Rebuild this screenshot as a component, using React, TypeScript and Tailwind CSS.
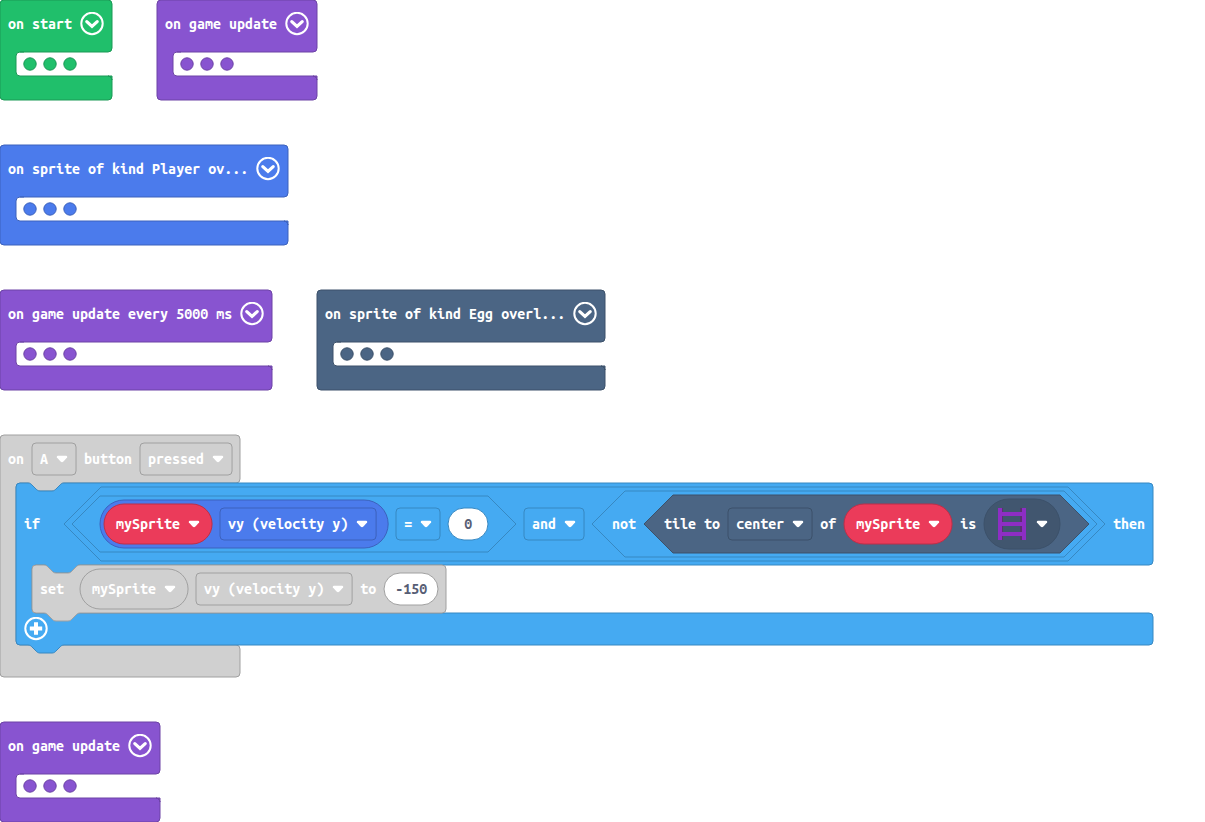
import React from "react";

type Tone = { fill: string; stroke: string };

const GREEN: Tone = { fill: "#20bf6b", stroke: "#1a9956" };
const PURPLE: Tone = { fill: "#8854d0", stroke: "#6d43a6" };
const BLUE: Tone = { fill: "#4b7bec", stroke: "#3c62bd" };
const SLATE: Tone = { fill: "#4b6584", stroke: "#3c516a" };
const SLATE_DARK: Tone = { fill: "#41566f", stroke: "#3c516a" };
const SKY: Tone = { fill: "#45aaf2", stroke: "#3788c2" };
const RED: Tone = { fill: "#eb3b5a", stroke: "#bc2f48" };
const GRAY: Tone = { fill: "#d0d0d0", stroke: "#a0a0a0" };
const WHITE_SKY: Tone = { fill: "#ffffff", stroke: "#3788c2" };
const WHITE_GRAY: Tone = { fill: "#ffffff", stroke: "#a0a0a0" };

const NOTCH = "c2,0 3,1 4,2 l4,4 c1,1 2,2 4,2 h12 c2,0 3,-1 4,-2 l4,-4 c1,-1 2,-2 4,-2";
const NOTCH_BACK = "c-2,0 -3,1 -4,2 l-4,4 c-1,1 -2,2 -4,2 h-12 c-2,0 -3,-1 -4,-2 l-4,-4 c-1,-1 -2,-2 -4,-2";

function Shape({ tone, d, children }: { tone: Tone; d?: string; children?: React.ReactNode }) {
  return (
    <svg className="absolute inset-0 -z-10 h-full w-full overflow-visible" fill={tone.fill} stroke={tone.stroke} aria-hidden="true">
      {d && <path d={d} />}
      {children}
    </svg>
  );
}

function Label({ children, className = "text-white" }: { children: string; className?: string }) {
  return (
    <span
      className={`block shrink-0 -translate-y-[0.5px] scale-y-105 whitespace-pre font-['Ubuntu_Mono','DejaVu_Sans_Mono',monospace] text-[14.3px] leading-4 font-bold ${className}`}
    >
      {children}
    </span>
  );
}

function Arrow() {
  return (
    <svg className="h-3 w-3 shrink-0" viewBox="0 0 12 12" fill="white" aria-hidden="true">
      <path d="M1.8 2.8H10.2Q11.6 3 11.1 4.6L7.4 8.6Q6 9.8 4.6 8.6L.9 4.6Q.4 3 1.8 2.8Z" />
    </svg>
  );
}

function Field({ tone, text }: { tone: Tone; text: string }) {
  return (
    <div className="relative isolate flex h-8 shrink-0 items-center gap-2 px-2">
      <Shape tone={tone}>
        <rect width="100%" height="100%" rx="4" />
      </Shape>
      <Label>{text}</Label>
      <Arrow />
    </div>
  );
}

function Variable({ tone }: { tone: Tone }) {
  return (
    <div className="relative isolate flex h-10 shrink-0 items-center gap-2 px-3">
      <Shape tone={tone}>
        <rect width="100%" height="100%" rx="20" />
      </Shape>
      <Label>mySprite</Label>
      <Arrow />
    </div>
  );
}

function NumberInput({ tone, value, className }: { tone: Tone; value: string; className: string }) {
  return (
    <div className={`relative isolate flex h-8 shrink-0 items-center justify-center ${className}`}>
      <Shape tone={tone}>
        <rect width="100%" height="100%" rx="16" />
      </Shape>
      <Label className="text-[#575e75]">{value}</Label>
    </div>
  );
}

function Hexagon({ tone, w, h, className, children }: { tone: Tone; w: number; h: number; className: string; children: React.ReactNode }) {
  const r = h / 2;
  return (
    <div className={`relative isolate flex shrink-0 items-center gap-2 ${className}`}>
      <Shape tone={tone} d={`M${r},0 H${w - r} L${w},${r} L${w - r},${h} H${r} L0,${r} Z`} />
      {children}
    </div>
  );
}

function CollapsedBlock({ tone, text, w, className }: { tone: Tone; text: string; w: number; className: string }) {
  return (
    <section className={`relative isolate h-[100px] shrink-0 ${className}`}>
      <Shape
        tone={tone}
        d={`M0,4 a4,4 0 0 1 4,-4 H${w - 4} a4,4 0 0 1 4,4 V48 a4,4 0 0 1 -4,4 H20 a4,4 0 0 0 -4,4 V72 a4,4 0 0 0 4,4 H${w - 4} a4,4 0 0 1 4,4 V96 a4,4 0 0 1 -4,4 H4 a4,4 0 0 1 -4,-4 Z`}
      >
        <path d="M20,52 H24" />
        <path d={`M${w - 4},76 H${w} V80 a4,4 0 0 0 -4,-4`} />
      </Shape>
      <header className="flex h-12 items-center justify-between px-2">
        <Label>{text}</Label>
        <svg className="h-6 w-6 shrink-0" viewBox="0 0 24 24" fill="none" stroke="white" aria-hidden="true">
          <circle cx="12" cy="11.5" r="10.7" strokeWidth="2" />
          <path d="M6.8 9.6L12 14.4L17.2 9.6" strokeWidth="3.2" strokeLinecap="round" />
        </svg>
      </header>
      <div className="flex h-8 items-end pb-2.5 pl-[23px]">
        <svg className="h-3 w-[54px] overflow-visible" fill={tone.fill} stroke={tone.stroke} aria-hidden="true">
          <circle cx="7" cy="6" r="6.2" />
          <circle cx="27" cy="6" r="6.2" />
          <circle cx="47" cy="6" r="6.2" />
        </svg>
      </div>
    </section>
  );
}

function Ladder() {
  return (
    <svg className="h-8 w-8 shrink-0" viewBox="0 0 32 32" shapeRendering="crispEdges" aria-hidden="true">
      <path fill="#5c3070" d="M5 0h2v32H5zM24 0h2v32h-2z" />
      <path fill="#8e2ec4" d="M2 0h4v32H2zM26 0h4v32h-4zM2 4h28v4H2zM2 14h28v4H2zM2 24h28v4H2z" />
    </svg>
  );
}

function Condition() {
  return (
    <Hexagon tone={SKY} w={1041} h={74} className="ml-4 h-[74px] w-[1041px] px-2">
      <Hexagon tone={SKY} w={444} h={56} className="h-14 w-[444px] px-7">
        <div className="relative isolate flex h-12 shrink-0 items-center gap-2 pr-3 pl-1">
          <Shape tone={BLUE}>
            <rect width="100%" height="100%" rx="24" />
          </Shape>
          <Variable tone={RED} />
          <Field tone={BLUE} text="vy (velocity y)" />
        </div>
        <Field tone={SKY} text="=" />
        <NumberInput tone={WHITE_SKY} value="0" className="w-10" />
      </Hexagon>
      <Field tone={SKY} text="and" />
      <Hexagon tone={SKY} w={505} h={66} className="h-[66px] w-[505px] pl-5">
        <Label>not</Label>
        <Hexagon tone={SLATE} w={445} h={58} className="h-[58px] w-[445px] pl-5">
          <Label>tile to</Label>
          <Field tone={SLATE} text="center" />
          <Label>of</Label>
          <Variable tone={RED} />
          <Label>is</Label>
          <div className="relative isolate flex h-[50px] shrink-0 items-center gap-2 px-3">
            <Shape tone={SLATE_DARK}>
              <rect width="100%" height="100%" rx="25" />
            </Shape>
            <Ladder />
            <Arrow />
          </div>
        </Hexagon>
      </Hexagon>
    </Hexagon>
  );
}

function SetVelocity() {
  return (
    <div className="relative isolate flex h-12 w-[414px] items-center gap-2 pl-2">
      <Shape
        tone={GRAY}
        d={`M0,4 a4,4 0 0 1 4,-4 H12 ${NOTCH} H410 a4,4 0 0 1 4,4 V44 a4,4 0 0 1 -4,4 H48 ${NOTCH_BACK} H4 a4,4 0 0 1 -4,-4 Z`}
      />
      <Label className="mr-2 text-white">set</Label>
      <Variable tone={GRAY} />
      <Field tone={GRAY} text="vy (velocity y)" />
      <Label>to</Label>
      <NumberInput tone={WHITE_GRAY} value="-150" className="w-[54px]" />
    </div>
  );
}

function IfBlock() {
  return (
    <div className="relative isolate h-[162px] w-[1137px]">
      <Shape
        tone={SKY}
        d={`M0,4 a4,4 0 0 1 4,-4 H12 ${NOTCH} H1133 a4,4 0 0 1 4,4 V78 a4,4 0 0 1 -4,4 H64 ${NOTCH_BACK} H20 a4,4 0 0 0 -4,4 V126 a4,4 0 0 0 4,4 H1133 a4,4 0 0 1 4,4 V158 a4,4 0 0 1 -4,4 H48 ${NOTCH_BACK} H4 a4,4 0 0 1 -4,-4 Z`}
      />
      <div className="flex h-[82px] items-center gap-2 pl-2">
        <Label>if</Label>
        <Condition />
        <Label>then</Label>
      </div>
      <div className="pl-4">
        <SetVelocity />
      </div>
      <div className="flex h-8 items-center pl-2">
        <svg className="h-6 w-6" viewBox="0 0 24 24" fill="none" stroke="white" aria-hidden="true">
          <circle cx="12" cy="11.5" r="10.7" strokeWidth="2" />
          <path d="M12 5.3v12.4M5.8 11.5h12.4" strokeWidth="4" />
        </svg>
      </div>
    </div>
  );
}

function ButtonBlock() {
  return (
    <section className="relative isolate h-[242px] w-[240px]">
      <Shape
        tone={GRAY}
        d={`M0,4 a4,4 0 0 1 4,-4 H236 a4,4 0 0 1 4,4 V44 a4,4 0 0 1 -4,4 H64 ${NOTCH_BACK} H20 a4,4 0 0 0 -4,4 V206 a4,4 0 0 0 4,4 H236 a4,4 0 0 1 4,4 V238 a4,4 0 0 1 -4,4 H4 a4,4 0 0 1 -4,-4 Z`}
      />
      <div className="flex h-12 items-center gap-2 px-2">
        <Label>on</Label>
        <Field tone={GRAY} text="A" />
        <Label>button</Label>
        <Field tone={GRAY} text="pressed" />
      </div>
      <div className="pl-4">
        <IfBlock />
      </div>
    </section>
  );
}

export default function App() {
  return (
    <main className="flex h-[822px] w-[1205px] flex-col gap-[45px] overflow-hidden bg-white">
      <div className="flex gap-[45px]">
        <CollapsedBlock tone={GREEN} text="on start" w={112} className="w-28" />
        <CollapsedBlock tone={PURPLE} text="on game update" w={160} className="w-40" />
      </div>
      <CollapsedBlock tone={BLUE} text="on sprite of kind Player ov..." w={288} className="w-72" />
      <div className="flex gap-[45px]">
        <CollapsedBlock tone={PURPLE} text="on game update every 5000 ms" w={272} className="w-[272px]" />
        <CollapsedBlock tone={SLATE} text="on sprite of kind Egg overl..." w={288} className="w-72" />
      </div>
      <ButtonBlock />
      <CollapsedBlock tone={PURPLE} text="on game update" w={160} className="w-40" />
    </main>
  );
}
